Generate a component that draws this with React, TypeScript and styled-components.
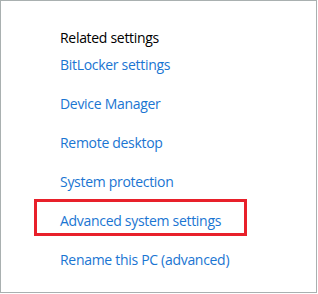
import React from 'react';
import styled, { createGlobalStyle } from 'styled-components';

const GlobalStyle = createGlobalStyle`
  html, body {
    margin: 0;
    padding: 0;
    background: #ffffff;
  }
`;

const links = [
  'BitLocker settings',
  'Device Manager',
  'Remote desktop',
  'System protection',
  'Advanced system settings',
  'Rename this PC (advanced)',
];

const HIGHLIGHTED = 'Advanced system settings';

const App: React.FC = () => {
  return (
    <>
      <GlobalStyle />
      <Frame>
        <Title>Related settings</Title>
        <LinkList>
          {links.map((label) => (
            <LinkRow key={label} $highlighted={label === HIGHLIGHTED}>
              <LinkText>{label}</LinkText>
            </LinkRow>
          ))}
        </LinkList>
      </Frame>
    </>
  );
};

const Frame = styled.div`
  box-sizing: border-box;
  width: 317px;
  height: 293px;
  border: 1px solid #a9b0b0;
  background: #ffffff;
  padding: 27px 0 0 59px;
  font-family: 'Open Sans', 'Noto Sans', sans-serif;
  letter-spacing: -0.3px;
`;

const Title = styled.div`
  font-size: 14px;
  line-height: 20px;
  color: #000000;
`;

const LinkList = styled.div`
  display: flex;
  flex-direction: column;
  gap: 19px;
  margin-top: 5px;
`;

const LinkRow = styled.div<{ $highlighted?: boolean }>`
  position: relative;
  height: 20px;

  ${({ $highlighted }) =>
    $highlighted &&
    `
    &::before {
      content: '';
      position: absolute;
      left: -26px;
      top: -10px;
      width: 213px;
      height: 37px;
      box-sizing: border-box;
      border: 3px solid #e8202a;
    }
  `}
`;

const LinkText = styled.span`
  font-size: 14px;
  line-height: 20px;
  color: #1a75d2;
  white-space: nowrap;
`;

export default App;
